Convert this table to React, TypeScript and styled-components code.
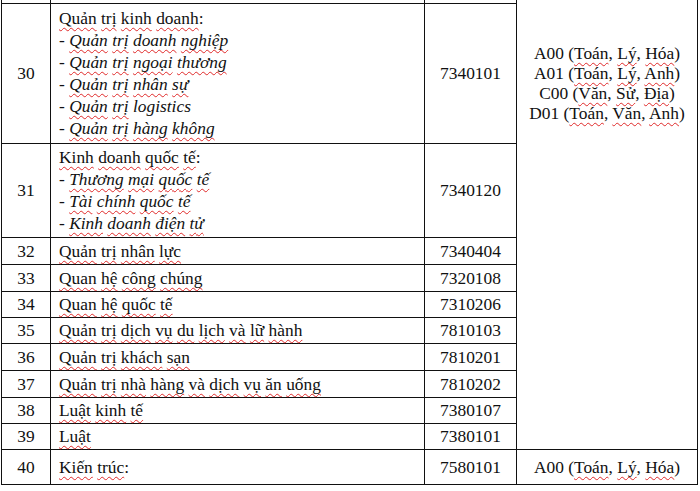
import React from 'react';
import styled, { createGlobalStyle } from 'styled-components';

interface Major {
  no: number;
  title: string;
  subs?: string[];
  code: string;
  height: number;
}

const majors: Major[] = [
  {
    no: 30,
    title: 'Quản trị kinh doanh:',
    subs: ['Quản trị doanh nghiệp', 'Quản trị ngoại thương', 'Quản trị nhân sự', 'Quản trị logistics', 'Quản trị hàng không'],
    code: '7340101',
    height: 140,
  },
  {
    no: 31,
    title: 'Kinh doanh quốc tế:',
    subs: ['Thương mại quốc tế', 'Tài chính quốc tế', 'Kinh doanh điện tử'],
    code: '7340120',
    height: 94,
  },
  { no: 32, title: 'Quản trị nhân lực', code: '7340404', height: 27 },
  { no: 33, title: 'Quan hệ công chúng', code: '7320108', height: 27 },
  { no: 34, title: 'Quan hệ quốc tế', code: '7310206', height: 26 },
  { no: 35, title: 'Quản trị dịch vụ du lịch và lữ hành', code: '7810103', height: 26 },
  { no: 36, title: 'Quản trị khách sạn', code: '7810201', height: 27 },
  { no: 37, title: 'Quản trị nhà hàng và dịch vụ ăn uống', code: '7810202', height: 27 },
  { no: 38, title: 'Luật kinh tế', code: '7380107', height: 26 },
  { no: 39, title: 'Luật', code: '7380101', height: 26 },
];

const groups = ['A00 (Toán, Lý, Hóa)', 'A01 (Toán, Lý, Anh)', 'C00 (Văn, Sử, Địa)', 'D01 (Toán, Văn, Anh)'];

// words Word's spell checker leaves alone
const PLAIN = new Set(['logistics', 'A00', 'A01', 'C00', 'D01']);

const GlobalStyle = createGlobalStyle`
  html, body {
    margin: 0;
    padding: 0;
    background: #fff;
  }
  body {
    font-family: "Liberation Serif", "Times New Roman", serif;
    color: #111;
  }
`;

const Page = styled.div`
  width: 700px;
  height: 491px;
  overflow: hidden;
  padding-left: 1px;
  box-sizing: border-box;
`;

const Sheet = styled.table`
  border-collapse: collapse;
  table-layout: fixed;
  width: 696px;
  font-size: 17.4px;
`;

const Row = styled.tr<{ $h: number }>`
  height: ${(p) => p.$h}px;
`;

const Cell = styled.td`
  border: 1px solid #111;
  padding: 0;
  vertical-align: middle;
  line-height: 22px;
`;

const EdgeCell = styled(Cell)`
  border-top: none;
  border-bottom: none;
`;

const NumCell = styled(Cell)`
  text-align: center;
`;

const NameCell = styled(Cell)`
  padding-left: 8px;
  text-align: left;
`;

const CodeCell = styled(Cell)`
  text-align: center;
`;

const GroupCell = styled(Cell)<{ $top: number }>`
  border-top: none;
  text-align: center;
  vertical-align: top;
  padding-top: ${(p) => p.$top}px;
  line-height: 20px;
`;

const Line = styled.div``;

const Sub = styled.span`
  font-style: italic;
`;

const Spell = styled.span`
  text-decoration: underline wavy #e02a2a;
  text-decoration-thickness: 1px;
  text-underline-offset: 3px;
  text-decoration-skip-ink: none;
`;

function Words({ text }: { text: string }) {
  const parts = text.split(' ');
  return (
    <>
      {parts.map((w, i) => {
        const m = w.match(/^(\(?)(.*?)([,:)]*)$/) as RegExpMatchArray;
        const [, lead, word, tail] = m;
        return (
          <React.Fragment key={i}>
            {lead}
            {PLAIN.has(word) ? word : <Spell>{word}</Spell>}
            {tail}
            {i < parts.length - 1 ? ' ' : ''}
          </React.Fragment>
        );
      })}
    </>
  );
}

export default function App() {
  return (
    <Page>
      <GlobalStyle />
      <Sheet>
        <colgroup>
          <col style={{ width: 49 }} />
          <col style={{ width: 374 }} />
          <col style={{ width: 92 }} />
          <col style={{ width: 181 }} />
        </colgroup>
        <tbody>
          <Row $h={3}>
            <EdgeCell />
            <EdgeCell />
            <EdgeCell />
            <GroupCell rowSpan={majors.length + 1} $top={43}>
              {groups.map((g) => (
                <Line key={g}>
                  <Words text={g} />
                </Line>
              ))}
            </GroupCell>
          </Row>
          {majors.map((m) => (
            <Row key={m.no} $h={m.height}>
              <NumCell>{m.no}</NumCell>
              <NameCell>
                <Line>
                  <Words text={m.title} />
                </Line>
                {m.subs?.map((s) => (
                  <Line key={s}>
                    -{' '}
                    <Sub>
                      <Words text={s} />
                    </Sub>
                  </Line>
                ))}
              </NameCell>
              <CodeCell>{m.code}</CodeCell>
            </Row>
          ))}
          <Row $h={35}>
            <NumCell>40</NumCell>
            <NameCell>
              <Words text="Kiến trúc:" />
            </NameCell>
            <CodeCell>7580101</CodeCell>
            <CodeCell>
              <Words text="A00 (Toán, Lý, Hóa)" />
            </CodeCell>
          </Row>
        </tbody>
      </Sheet>
    </Page>
  );
}
